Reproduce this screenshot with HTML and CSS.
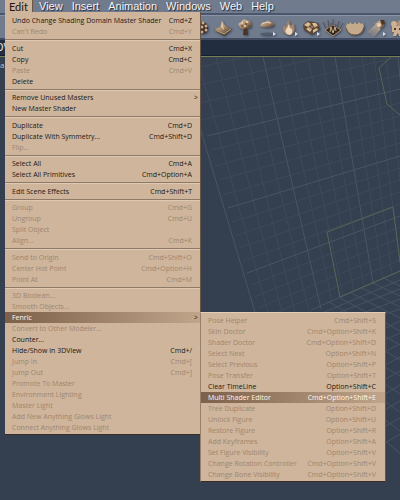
FILE: index.html
```html
<!DOCTYPE html>
<html lang="en">
<head>
<meta charset="utf-8">
<title>Edit menu</title>
<link rel="stylesheet" href="styles.css">
</head>
<body>
<div class="app">
  <nav class="menubar">
    <div class="menu-root">
      <button class="menu-title open" type="button">Edit</button>
      <div class="menu main-menu">
        <ul class="group">
          <li><button type="button">Undo Change Shading Domain Master Shader<kbd>Cmd+Z</kbd></button></li>
          <li><button type="button" disabled>Can't Redo<kbd>Cmd+Y</kbd></button></li>
        </ul>
        <ul class="group">
          <li><button type="button">Cut<kbd>Cmd+X</kbd></button></li>
          <li><button type="button">Copy<kbd>Cmd+C</kbd></button></li>
          <li><button type="button" disabled>Paste<kbd>Cmd+V</kbd></button></li>
          <li><button type="button">Delete</button></li>
        </ul>
        <ul class="group">
          <li><button type="button" class="parent">Remove Unused Masters<span>&gt;</span></button></li>
          <li><button type="button">New Master Shader</button></li>
        </ul>
        <ul class="group">
          <li><button type="button">Duplicate<kbd>Cmd+D</kbd></button></li>
          <li><button type="button">Duplicate With Symmetry...<kbd>Cmd+Shift+D</kbd></button></li>
          <li><button type="button" disabled>Flip...</button></li>
        </ul>
        <ul class="group">
          <li><button type="button">Select All<kbd>Cmd+A</kbd></button></li>
          <li><button type="button">Select All Primitives<kbd>Cmd+Option+A</kbd></button></li>
        </ul>
        <ul class="group">
          <li><button type="button">Edit Scene Effects<kbd>Cmd+Shift+T</kbd></button></li>
        </ul>
        <ul class="group">
          <li><button type="button" disabled>Group<kbd>Cmd+G</kbd></button></li>
          <li><button type="button" disabled>Ungroup<kbd>Cmd+U</kbd></button></li>
          <li><button type="button" disabled>Split Object</button></li>
          <li><button type="button" disabled>Align...<kbd>Cmd+K</kbd></button></li>
        </ul>
        <ul class="group">
          <li><button type="button" disabled>Send to Origin<kbd>Cmd+Shift+O</kbd></button></li>
          <li><button type="button" disabled>Center Hot Point<kbd>Cmd+Option+H</kbd></button></li>
          <li><button type="button" disabled>Point At<kbd>Cmd+M</kbd></button></li>
        </ul>
        <ul class="group">
          <li><button type="button" disabled>3D Boolean...</button></li>
          <li><button type="button" disabled>Smooth Objects...</button></li>
          <li class="has-submenu">
            <button type="button" class="parent selected">Fenric<span>&gt;</span></button>
            <ul class="menu submenu">
              <li><button type="button" disabled>Pose Helper<kbd>Cmd+Shift+S</kbd></button></li>
              <li><button type="button" disabled>Skin Doctor<kbd>Cmd+Option+Shift+K</kbd></button></li>
              <li><button type="button" disabled>Shader Doctor<kbd>Cmd+Option+Shift+D</kbd></button></li>
              <li><button type="button" disabled>Select Next<kbd>Option+Shift+N</kbd></button></li>
              <li><button type="button" disabled>Select Previous<kbd>Option+Shift+P</kbd></button></li>
              <li><button type="button" disabled>Pose Transfer<kbd>Option+Shift+T</kbd></button></li>
              <li><button type="button">Clear TimeLine<kbd>Option+Shift+C</kbd></button></li>
              <li><button type="button" class="selected">Multi Shader Editor<kbd>Cmd+Option+Shift+E</kbd></button></li>
              <li><button type="button" disabled>Tree Duplicate<kbd>Option+Shift+D</kbd></button></li>
              <li><button type="button" disabled>Unlock Figure<kbd>Option+Shift+U</kbd></button></li>
              <li><button type="button" disabled>Restore Figure<kbd>Option+Shift+R</kbd></button></li>
              <li><button type="button" disabled>Add Keyframes<kbd>Option+Shift+A</kbd></button></li>
              <li><button type="button" disabled>Set Figure Visibility<kbd>Option+Shift+V</kbd></button></li>
              <li><button type="button" disabled>Change Rotation Controller<kbd>Cmd+Option+Shift+V</kbd></button></li>
              <li><button type="button" disabled>Change Bone Visibility<kbd>Cmd+Option+Shift+V</kbd></button></li>
            </ul>
          </li>
          <li><button type="button" disabled>Convert to Other Modeler...</button></li>
          <li><button type="button">Counter...</button></li>
          <li><button type="button">Hide/Show in 3DView<kbd>Cmd+/</kbd></button></li>
          <li><button type="button" disabled>Jump In<kbd>Cmd+[</kbd></button></li>
          <li><button type="button" disabled>Jump Out<kbd>Cmd+]</kbd></button></li>
          <li><button type="button" disabled>Promote To Master</button></li>
          <li><button type="button" disabled>Environment Lighting</button></li>
          <li><button type="button" disabled>Master Light</button></li>
          <li><button type="button" disabled>Add New Anything Glows Light</button></li>
          <li><button type="button" disabled>Connect Anything Glows Light</button></li>
        </ul>
      </div>
    </div>
    <button class="menu-title" type="button">View</button>
    <button class="menu-title" type="button">Insert</button>
    <button class="menu-title" type="button">Animation</button>
    <button class="menu-title" type="button">Windows</button>
    <button class="menu-title" type="button">Web</button>
    <button class="menu-title" type="button">Help</button>
  </nav>

  <div class="toolbar">
    <svg width="0" height="0" class="defs">
      <defs>
        <linearGradient id="tan" x1="0" y1="0" x2="1" y2="1">
          <stop offset="0" stop-color="#e6cfb4"/><stop offset=".5" stop-color="#a98b6e"/><stop offset="1" stop-color="#4c3828"/>
        </linearGradient>
        <linearGradient id="beam" x1="1" y1="0" x2="0" y2="1">
          <stop offset="0" stop-color="#cdb598"/><stop offset="1" stop-color="#cdb598" stop-opacity="0"/>
        </linearGradient>
      </defs>
    </svg>
    <button type="button" aria-label="Metaball"><svg viewBox="0 0 22 22"><circle cx="12" cy="11" r="6" fill="#3e2f26"/><g fill="#c9ac8c"><circle cx="8" cy="7" r="1.5"/><circle cx="13" cy="6" r="1.5"/><circle cx="16" cy="9" r="1.5"/><circle cx="12" cy="10" r="1.5"/><circle cx="8" cy="13" r="1.5"/><circle cx="16" cy="13" r="1.5"/><circle cx="12" cy="15" r="1.5"/></g></svg></button>
    <button type="button" aria-label="Terrain"><svg viewBox="0 0 22 22"><path d="M2 13 10 9 20 12 12 19Z" fill="#58422f"/><path d="M3 12 8 10 10 4 12 7 14 9 19 12 12 17Z" fill="url(#tan)"/><path d="M10 4 9 10 12 13 11 8Z" fill="#dcc5a8"/><path d="M3 13 12 17 19 12" fill="none" stroke="#c0a282"/></svg></button>
    <button type="button" aria-label="Tree"><svg viewBox="0 0 22 22"><path d="M10 10H13L14 18H9Z" fill="#493426"/><path d="M5 9Q3 6 7 5 9 1 13 3 18 4 17 8 18 12 13 11 7 14 5 9Z" fill="url(#tan)"/><g fill="#6a523e"><circle cx="8" cy="9" r="1"/><circle cx="12" cy="7" r="1"/><circle cx="15" cy="9" r="1"/></g><g fill="#ead7bb"><circle cx="8" cy="6" r="1"/><circle cx="13" cy="5" r="1"/><circle cx="11" cy="9" r="1"/></g></svg></button>
    <button type="button" aria-label="Cloud"><svg viewBox="0 0 22 22"><path d="M4 9Q5 5 9 5 13 2 15 5 19 6 18 9Q11 12 4 9Z" fill="url(#tan)"/><path d="M6 7Q10 4 15 6" stroke="#e4d0b5" fill="none"/><ellipse cx="11" cy="17" rx="7" ry="1.5" fill="#535a6b"/><path d="M17 15 20 17 17 19Z" fill="#dce1e9"/></svg></button>
    <button type="button" aria-label="Fire"><svg viewBox="0 0 22 22"><path d="M8 17Q3 14 6 8L8 10Q8 6 11 3 11 7 13 9L15 6Q19 14 14 17Q11 19 8 17Z" fill="#a3866b"/><path d="M9 17Q6 14 9 11L11 7 12 11 14 12Q15 17 12 18Z" fill="#ecd6bb"/><path d="M17 15 20 17 17 19Z" fill="#dce1e9"/></svg></button>
    <button type="button" aria-label="Rocks"><svg viewBox="0 0 22 22"><path d="M3 8 8 4 18 6 20 12 12 18 4 13Z" fill="#5a4534"/><path d="M4 8 8 5 11 7 8 10ZM12 6 16 6 18 9 14 10ZM6 12 9 10 12 12 10 15ZM13 13 17 11 18 13 13 16Z" fill="#d8bc98"/><path d="M9 8 13 10 9 12M14 10 17 12" stroke="#a3835f" fill="none"/><path d="M17 15 20 17 17 19Z" fill="#dce1e9"/></svg></button>
    <button type="button" aria-label="Hair"><svg viewBox="0 0 22 22"><path d="M3 13 11 8 19 13 11 19Z" fill="#302820" stroke="#b4936d"/><path d="M4 12 1 5M7 12 6 3M11 12V2M15 12 17 4M18 12 21 6M9 12 9 6M13 12 14 7" stroke="#483c36" stroke-width=".6" fill="none"/><path d="M8 15 9 10 11 16 13 10 14 14" stroke="#cfaf88" fill="none"/></svg></button>
    <button type="button" aria-label="Ocean"><svg viewBox="0 0 22 22"><path d="M3 6Q5 9 6 5 9 9 11 5 13 9 15 5 17 8 19 6L20 10Q18 18 11 18 4 18 2 10Z" fill="#c5a98b"/><path d="M2 11Q4 18 11 18 18 18 20 10" fill="none" stroke="#715641"/></svg></button>
    <button type="button" aria-label="Spotlight"><svg viewBox="0 0 22 22"><path d="M10 7 15 12 8 20 1 15Z" fill="url(#beam)"/><path d="M9 7 14 3 19 7 15 12Z" fill="url(#tan)"/><path d="M14 3 18 3 19 7 16 8Z" fill="#4a382d"/><circle cx="13" cy="8" r="2" fill="#e7cfae"/><path d="M17 15 20 17 17 19Z" fill="#dce1e9"/></svg></button>
    <button type="button" aria-label="Camera"><svg viewBox="0 0 22 22"><circle cx="6" cy="7" r="3" fill="#cfb291"/><circle cx="13" cy="7" r="4" fill="#b09377"/><path d="M4 9H16V15H14L15 19H11L10 16 8 19H5L6 15H4Z" fill="#cdb091"/><path d="M6 11H8V13H6ZM11 11H13V13H11Z" fill="#4a382d"/></svg></button>
  </div>

  <div class="titlebar">OV</div>

  <main class="viewport">
    <span class="caption">a</span>
    <svg class="scene" viewBox="0 57 400 443" preserveAspectRatio="xMinYMin slice" aria-hidden="true">
      <g class="minor">
        <path d="M197 57 268 312M216 57 282 312M232 57 295 312M248 57 309 312M279 57 332 301M293 57 343 296M308 57 354 291M322 57 364 287M349 57 383 279M362 57 392 275M374 57 401 271M386 57 410 266"/>
        <path d="M200 67 245 57M200 85 322 57M200 103 399 57M200 120 400 75M211 150 400 103M215 166 400 116M219 180 400 129M223 195 400 143M232 222 400 168M235 236 400 180M239 248 400 192M243 261 400 204M251 285 400 227M254 297 400 238M258 308 400 249M262 319 400 260"/>
      </g>
      <g class="major">
        <path d="M179 57 255 312M263 57 321 309M335 57 373 283M398 57 418 262M207 136 400 89M228 208 400 156M247 273 400 216"/>
      </g>
      <g class="floor">
        <path d="M311 310 400 271M320 314 400 280M330 316 400 289M340 322 400 299M350 326 400 309M370 336 400 321M370 347 400 333M370 359 400 344M370 373 400 357M370 388 400 371M370 403 400 385M370 418 400 401M370 435 400 418M380 446 400 434"/>
        <path d="M329 302 350 314M340 298 370 314M351 293 400 318M362 288 400 307M373 283 400 296M384 278 400 286M370 314 400 331M370 328 400 345M370 342 400 360M370 358 400 376M370 374 400 394M370 391 400 412M370 409 400 431M370 429 400 453"/>
      </g>
      <g class="outline">
        <path d="M340 297 327 232 393 207 400 262"/>
        <path d="M391 57 379 68 387 104 400 115"/>
        <path d="M340 297 400 271"/>
      </g>
    </svg>
  </main>
</div>
</body>
</html>
```
FILE: styles.css
```css
* { box-sizing: border-box; }

body {
  margin: 0;
  font-family: "Open Sans", "Noto Sans", sans-serif;
  background: #343f50;
}

.app {
  display: flex;
  flex-direction: column;
  min-height: 100vh;
  overflow: hidden;
}

button {
  margin: 0;
  padding: 0;
  border: 0;
  background: none;
  font: inherit;
  color: inherit;
  text-align: left;
}

ul { margin: 0; padding: 0; list-style: none; }

.menubar {
  display: flex;
  height: 13px;
  padding-left: 5px;
  background: #707b8e;
}

.menu-root { position: relative; margin-right: 2px; }

.menu-title {
  display: block;
  height: 12px;
  padding: 0 5px 0 4px;
  font-family: "Liberation Sans", sans-serif;
  font-size: 11px;
  line-height: 12px;
  color: #f2f4f7;
  text-shadow: 1px 1px 1px #1f2635;
}

.menu-title.open {
  width: 28px;
  height: 13px;
  font-family: Lato, sans-serif;
  background: #ceb59c;
  border-right: 1px solid #6b5442;
  color: #1d1713;
  text-shadow: none;
}

.menu {
  position: absolute;
  z-index: 2;
  padding: 3px 0 1px;
  background: #ceb59c;
  border-right: 1px solid #6b5442;
  border-bottom: 1px solid #3a2c25;
  color: #1d1713;
  font-size: 7px;
  line-height: 11px;
}

.main-menu { top: 12px; left: 0; width: 196px; }

.group + .group {
  margin-top: 2px;
  padding-top: 2px;
  border-top: 1px solid #8f7a67;
  box-shadow: inset 0 1px #dfc9b2;
}
.group:nth-child(even) { padding-top: 3px; }

.menu button {
  display: flex;
  justify-content: space-between;
  width: 100%;
  height: 11px;
  padding: 0 8px 0 7px;
  white-space: nowrap;
}

.menu button.parent { padding-right: 2px; }
.menu kbd { font: inherit; }
.menu button:disabled { color: #a0866f; }

.menu button.selected {
  background: linear-gradient(90deg, #7d6049, #c0a58b);
  color: #fff8ee;
}
.menu button.selected span { color: #2a2019; }

.has-submenu { position: relative; }

.submenu {
  top: 0;
  left: 100%;
  width: 186px;
  border-top: 1px solid #e2cdb7;
  border-left: 1px solid #97806b;
  padding: 2px 0 1px;
}

.submenu button { padding-right: 9px; }

.toolbar {
  display: flex;
  height: 27px;
  padding: 2px 0 0 190px;
  background: #707b8e;
  border-top: 2px solid #4b566c;
  border-bottom: 2px solid #414c62;
  box-shadow: inset 0 1px #8994a7;
  overflow: hidden;
}

.toolbar .defs { position: absolute; }
.toolbar button { flex: 0 0 22px; height: 22px; }
.toolbar button svg { display: block; width: 22px; height: 22px; filter: drop-shadow(1px 1px 1px #3c4558); }

.titlebar {
  height: 17px;
  background: #232d40;
  border-bottom: 1px solid #747f55;
  box-shadow: inset 0 -1px #151d30;
  color: #f2f4f7;
  font-size: 11px;
  line-height: 14px;
  text-indent: -5px;
}

.viewport { position: relative; flex: 1; overflow: hidden; }
.caption { display: block; color: #b9c3d1; font-size: 8px; line-height: 16px; }

.scene { position: absolute; top: 0; left: 0; width: 100%; height: 100%; fill: none; }
.minor { stroke: #3e4959; }
.major { stroke: #4a5564; }
.floor { stroke: #505b6a; opacity: .7; }
.outline { stroke: #586655; }
```
